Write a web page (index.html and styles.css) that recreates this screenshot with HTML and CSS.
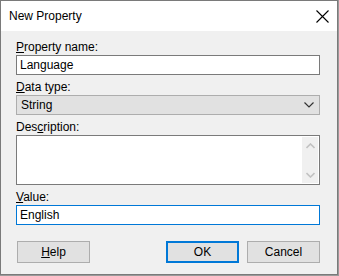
FILE: index.html
```html
<!DOCTYPE html>
<html lang="en">
<head>
  <meta charset="UTF-8">
  <title>New Property</title>
  <link rel="stylesheet" href="styles.css">
</head>
<body>
  <div class="dialog">
    <div class="titlebar">
      <span class="title">New Property</span>
      <span class="close">
        <svg width="13" height="13" viewBox="0 0 13 13"><path d="M0.5 0.5 L12.5 12.5 M12.5 0.5 L0.5 12.5" stroke="#000" stroke-width="1.1" fill="none"/></svg>
      </span>
    </div>
    <div class="content">
      <div class="field">
        <div class="label"><u>P</u>roperty name:</div>
        <div class="textbox">Language</div>
      </div>
      <div class="field">
        <div class="label"><u>D</u>ata type:</div>
        <div class="combo">
          <span>String</span>
          <svg width="10" height="6" viewBox="0 0 10 6"><path d="M0.5 0.5 L5 5 L9.5 0.5" stroke="#333" stroke-width="1.2" fill="none"/></svg>
        </div>
      </div>
      <div class="field">
        <div class="label">Des<u>c</u>ription:</div>
        <div class="memo">
          <div class="scroll">
            <svg width="9" height="6" viewBox="0 0 9 6"><path d="M0.5 5 L4.5 1 L8.5 5" stroke="#c2c2c2" stroke-width="1.6" fill="none"/></svg>
            <svg width="9" height="6" viewBox="0 0 9 6"><path d="M0.5 1 L4.5 5 L8.5 1" stroke="#c2c2c2" stroke-width="1.6" fill="none"/></svg>
          </div>
        </div>
      </div>
      <div class="field">
        <div class="label"><u>V</u>alue:</div>
        <div class="textbox focused">English</div>
      </div>
      <div class="buttons">
        <div class="btn"><u>H</u>elp</div>
        <div class="right">
          <div class="btn default">OK</div>
          <div class="btn">Cancel</div>
        </div>
      </div>
    </div>
  </div>
</body>
</html>
```

FILE: styles.css
```css
body {
  margin: 0;
  background-color: #9a9a9a;
  font-family: 'Liberation Sans', Arial, sans-serif;
  font-size: 12px;
  color: #000;
}
.dialog {
  width: 336px;
  height: 273px;
  border: 1px solid #7a7a7a;
  background-color: #f0f0f0;
  display: flex;
  flex-direction: column;
}
.titlebar {
  height: 30px;
  background-color: #fff;
  display: flex;
  align-items: center;
  justify-content: space-between;
  padding: 0 8px 0 8px;
}
.title {
  font-size: 12px;
  color: #000;
}
.close {
  display: flex;
}
.content {
  padding: 8px 17px 0 15px;
  display: flex;
  flex-direction: column;
  gap: 4px;
}
.field {
  display: flex;
  flex-direction: column;
}
.label {
  height: 16px;
  line-height: 16px;
}
.label u, .btn u {
  text-underline-offset: 1px;
}
.textbox {
  height: 18px;
  line-height: 18px;
  border: 1px solid #7a7a7a;
  background-color: #fff;
  padding: 0 3px;
}
.textbox.focused {
  border-color: #0078d7;
}
.combo {
  height: 18px;
  border: 1px solid #adadad;
  background-color: #e1e1e1;
  display: flex;
  align-items: center;
  justify-content: space-between;
  padding: 0 5px 0 4px;
}
.memo {
  height: 46px;
  border: 1px solid #7a7a7a;
  background-color: #fff;
  display: flex;
  justify-content: flex-end;
  padding: 1px;
}
.scroll {
  width: 16px;
  background-color: #f0f0f0;
  display: flex;
  flex-direction: column;
  align-items: center;
  justify-content: space-between;
  padding: 6px 0 5px;
}
.buttons {
  margin-top: 12px;
  display: flex;
  justify-content: space-between;
  padding-left: 1px;
}
.right {
  display: flex;
  gap: 8px;
}
.btn {
  width: 71px;
  height: 20px;
  line-height: 20px;
  border: 1px solid #adadad;
  background-color: #e1e1e1;
  text-align: center;
}
.btn.default {
  border: 2px solid #0078d7;
  width: 69px;
  height: 18px;
  line-height: 18px;
}
```
